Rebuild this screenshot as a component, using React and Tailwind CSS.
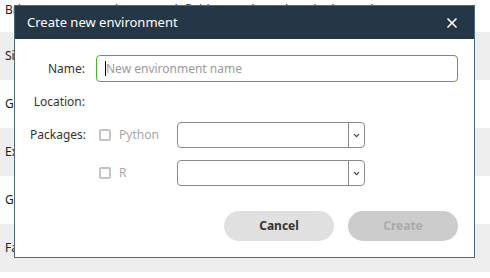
import { X, ChevronDown } from "lucide-react";

const rows = [
  "Bring your own environment definitions and run them in the workspace",
  "Simple",
  "GPU",
  "Experimental",
  "General",
  "Fast",
];

function PackageRow({ label }) {
  return (
    <div className="flex items-center h-[26px]">
      <div className="w-[80px] flex items-center gap-[8px] pl-[2px]">
        <span className="w-[12px] h-[12px] border-2 border-[#c4c4c4] rounded-[2px] bg-white" />
        <span className="text-[12px] text-[#a9a9a9]">{label}</span>
      </div>
      <div className="w-[188px] h-[26px] border border-[#8a8a8a] rounded-[4px] flex items-stretch bg-white">
        <div className="flex-1" />
        <div className="w-[16px] border-l border-[#8a8a8a] flex items-center justify-center">
          <ChevronDown size={9} strokeWidth={3} className="text-[#333]" />
        </div>
      </div>
    </div>
  );
}

export default function App() {
  return (
    <div
      className="relative w-[490px] h-[278px] overflow-hidden bg-white text-[#222]"
      style={{ fontFamily: '"Noto Sans", "Open Sans", sans-serif' }}
    >
      {/* list behind the dialog */}
      <div className="-mt-[16px]">
        {rows.map((r, i) => (
          <div
            key={i}
            className={`h-[48px] flex items-center px-[5px] text-[12px] whitespace-nowrap ${
              i % 2 === 1 ? "bg-[#eeeeee]" : "bg-white"
            } ${i === 0 ? "pt-[3px]" : ""}`}
          >
            {r}
          </div>
        ))}
      </div>

      {/* Dialog */}
      <div className="absolute left-[14px] top-[5px] w-[461px] h-[253px] border border-[#4b6b84] bg-white flex flex-col">
        <div className="h-[33px] bg-[#253646] flex items-center justify-between pl-[12px] pr-[14px] shrink-0">
          <span className="text-white text-[13px]">Create new environment</span>
          <X size={16} strokeWidth={2.5} className="text-white" />
        </div>

        <div className="flex flex-col pt-[16px] pl-[15px] pr-[16px]">
          <div className="flex items-center h-[27px]">
            <span className="w-[55px] text-right text-[12px] text-[#333]">Name:</span>
            <div className="ml-[11px] flex-1 h-[27px] border border-[#4caf2f] rounded-[4px] flex items-center pl-[8px]">
              <span className="w-px h-[15px] bg-black" />
              <span className="text-[12px] text-[#9a9a9a]">New environment name</span>
            </div>
          </div>

          <div className="flex items-center h-[20px] mt-[10px]">
            <span className="w-[55px] text-right text-[12px] text-[#333]">Location:</span>
          </div>

          <div className="flex mt-[10px]">
            <span className="w-[55px] text-right text-[12px] text-[#333] leading-[26px]">Packages:</span>
            <div className="ml-[12px] flex flex-col gap-[12px]">
              <PackageRow label="Python" />
              <PackageRow label="R" />
            </div>
          </div>

          <div className="flex justify-end gap-[14px] mt-[25px]">
            <button className="w-[110px] h-[30px] rounded-full bg-[#e0e0e0] text-[12px] font-bold text-[#333]">
              Cancel
            </button>
            <button className="w-[110px] h-[30px] rounded-full bg-[#cccccc] text-[12px] font-bold text-[#aaaaaa]">
              Create
            </button>
          </div>
        </div>
      </div>
    </div>
  );
}
